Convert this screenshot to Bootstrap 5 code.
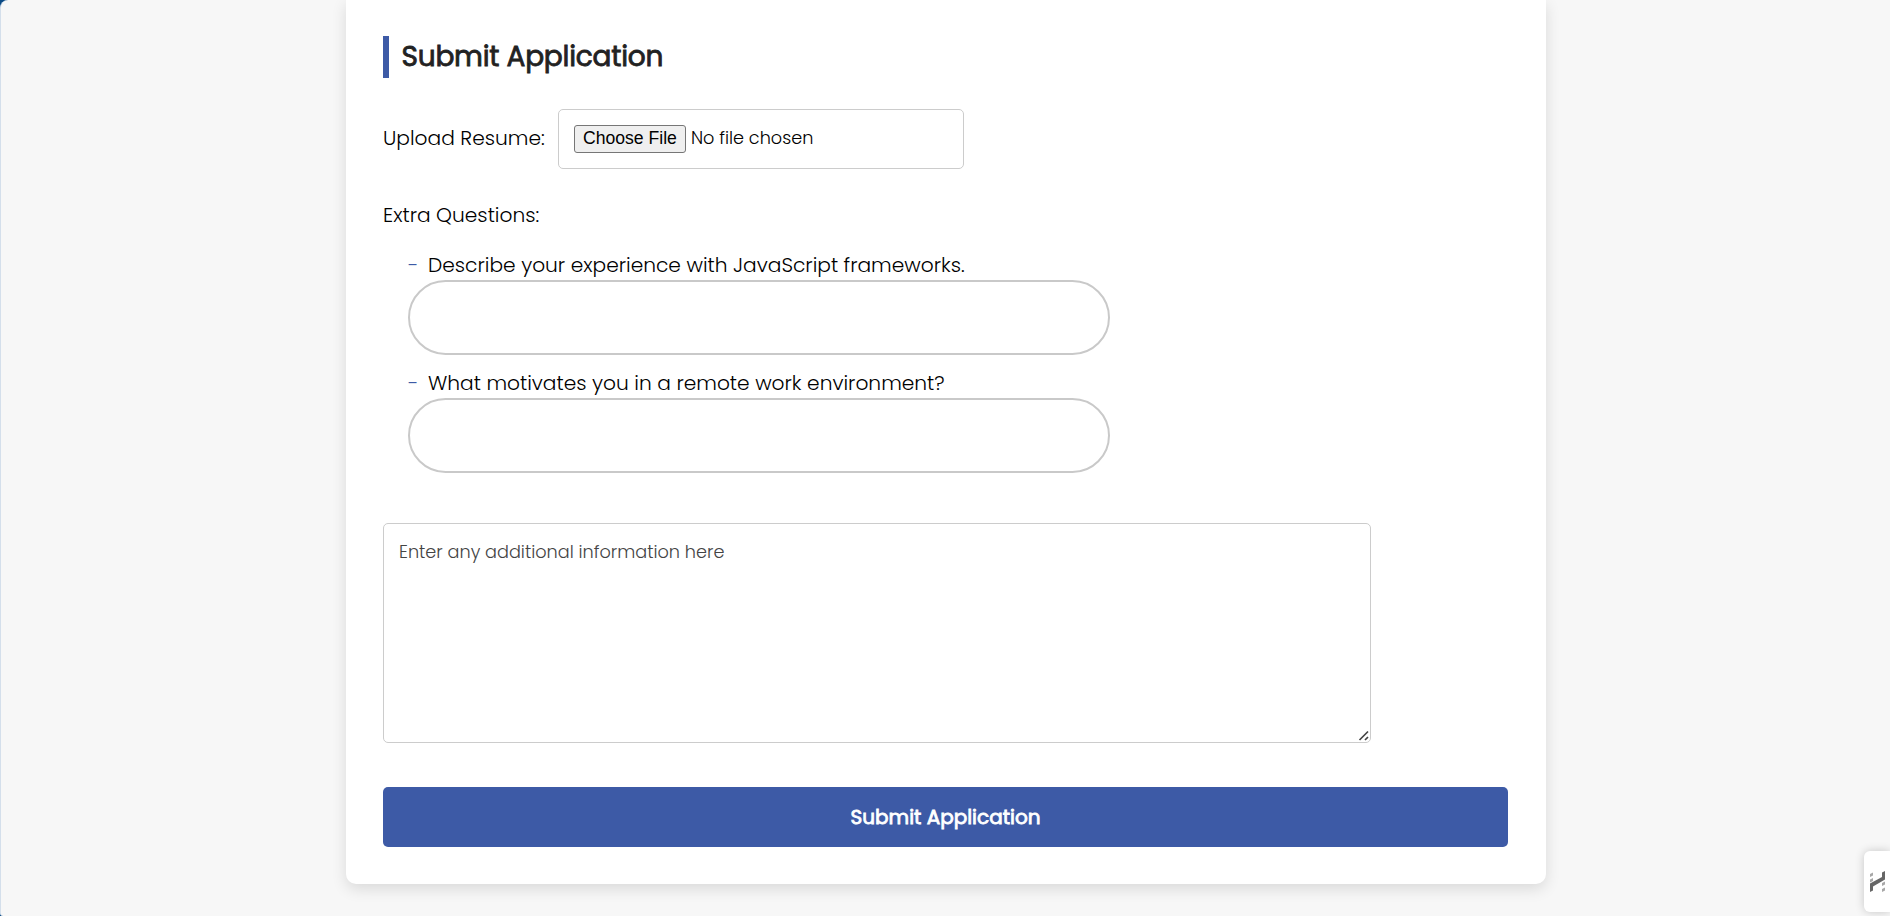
<!DOCTYPE html>
<html lang="en">
<head>
<meta charset="utf-8">
<meta name="viewport" content="width=device-width, initial-scale=1">
<title>Submit Application</title>
<link rel="stylesheet" href="https://cdn.jsdelivr.net/npm/bootstrap@5.3.0/dist/css/bootstrap.min.css">
<style>
html { background: #0b4a85; overflow: hidden; }
body { height: 916px; overflow: hidden; background: #0b4a85; color: #000; font-family: Poppins, Inter, sans-serif; font-size: 20.2px; line-height: 30px; font-weight: 300; }
.page-shell { height: 916px; background: #f7f7f7; border-left: 1px solid #d4dfeb; border-radius: 8px 0 0 3px; overflow: hidden; }
.apply-card { width: 1200px; height: 884px; margin-left: 345px; padding: 36px 38px 37px 37px; background: #fff; border-radius: 0 0 10px 10px; box-shadow: 0 5px 15px rgba(0,0,0,.12); }
.section-title { height: 42px; margin: 0; padding-left: 12.5px; border-left: 6px solid #3d5aa6; font-size: 28px; line-height: 42px; font-weight: 400; color: #222; -webkit-text-stroke: .8px #222; letter-spacing: -.24px; white-space: nowrap; }
.resume-row { margin-top: 31px; height: 60px; }
.resume-label { width: 175px; margin-top: -3px; }
.resume-file { width: 406px; height: 60px; padding: 14px 15px 16px; border: 1px solid #ccc; border-radius: 5px; font-size: 17.66px; line-height: 28px; color: #000; font-weight: 300; }
.resume-file::file-selector-button { height: 28px; padding: 1px 8px 3px; margin: 0 5px 0 0; border: 1px solid #767676; border-radius: 3px; background: #efefef; color: #000; font: 17.6px/22px "Liberation Sans", sans-serif; }
.extra-title { margin-top: 31px; }
.question-list { margin: 20px 0 0; padding-left: 25px; }
.question-list li { height: 118px; }
.question-text::before { content: "-"; display: inline-block; width: 20px; color: #3d5aa6; }
.answer { display: block; width: 702px; height: 75px; border: 2px solid #c9c9c9; border-radius: 38px; background: #fff; padding: 0 25px; }
.extra-info { display: block; width: 988px; height: 220px; margin-top: 37px; padding: 13px 15px; border: 1px solid #ccc; border-radius: 5px; font-size: 17.66px; font-weight: 300; resize: both; }
.extra-info::placeholder { color: #444; opacity: 1; }
.extra-info::-webkit-resizer { background: url("data:image/svg+xml,%3Csvg xmlns='http://www.w3.org/2000/svg' width='15' height='15'%3E%3Cpath d='M4.500 13 13 4.500M10 13 13 10' stroke='%23444' stroke-width='1.700'/%3E%3C/svg%3E") no-repeat; }
.submit-btn { height: 60px; margin-top: 44px; background: #3d5aa6; border: 0; border-radius: 5px; color: #fff; font-size: 20px; font-weight: 400; -webkit-text-stroke: .8px #fff; padding: 7px 0; }
.side-widget { right: 0; top: 851px; width: 26px; height: 61px; background: #fff; border-radius: 6px 0 0 6px; box-shadow: 0 0 10px rgba(0,0,0,.2); padding: 19px 0 0 5px; }
</style>
</head>
<body>
<div class="page-shell">
  <main class="apply-card">
    <h2 class="section-title"><span>Submit Application</span></h2>
    <form>
      <div class="resume-row d-flex align-items-center">
        <label class="resume-label text-nowrap" for="resume"><span>Upload Resume:</span></label>
        <input class="resume-file" id="resume" type="file">
      </div>
      <div class="extra-title"><span>Extra Questions:</span></div>
      <ul class="question-list list-unstyled">
        <li><label class="question-text d-block" for="q1"><span>Describe your experience with JavaScript frameworks.</span></label><input class="answer" id="q1" type="text"></li>
        <li><label class="question-text d-block" for="q2"><span>What motivates you in a remote work environment?</span></label><input class="answer" id="q2" type="text"></li>
      </ul>
      <textarea class="extra-info" placeholder="Enter any additional information here"></textarea>
      <button class="submit-btn btn w-100" type="button"><span>Submit Application</span></button>
    </form>
  </main>
</div>
<div class="side-widget position-fixed">
  <svg class="d-block" width="17" height="24" viewBox="0 0 17 24"><g fill="#a8a8a8"><path d="M1 4 4 2.500v3L1 7zM1 9.500 4 8v3l-3 1.500zM13 13l3-1.500v3L13 16zM13 19l3-1.500v3L13 22z"/></g><path fill="#666" d="M13 2.500 16 1v8.500L4 16.500v4L1 22v-8.500L13 7z"/></svg>
</div>
<script src="https://cdn.jsdelivr.net/npm/bootstrap@5.3.0/dist/js/bootstrap.bundle.min.js"></script>
</body>
</html>
